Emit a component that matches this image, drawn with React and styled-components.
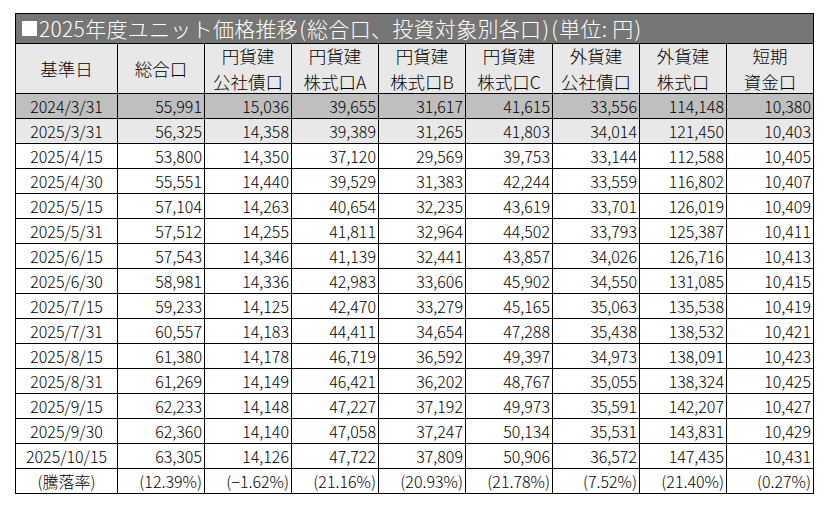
import React from "react";
import styled, { createGlobalStyle } from "styled-components";

const Global = createGlobalStyle`
  html, body { margin: 0; padding: 0; background: #ffffff; }
  body { font-family: "Noto Sans CJK JP", "Noto Sans", sans-serif; }
`;

const Page = styled.div`
  padding: 13px 15px;
`;

const Table = styled.div`
  display: grid;
  grid-template-columns: 102px repeat(8, 87px);
  width: 799px;
  border-left: 1px solid #000;
  border-top: 1px solid #000;
  box-sizing: border-box;
  color: #000;
  font-weight: 300;
`;

const Title = styled.div`
  grid-column: 1 / -1;
  height: 30px;
  box-sizing: border-box;
  background: #767676;
  color: #ffffff;
  border-right: 1px solid #000;
  border-bottom: 1px solid #000;
  display: flex;
  align-items: center;
  padding-left: 5px;
  font-size: 21px;
  line-height: 1;
  letter-spacing: 0.3px;
  white-space: nowrap;
`;

const Square = styled.span`
  display: inline-block;
  width: 15px;
  height: 15px;
  background: #ffffff;
  margin: 0 2px 0 1px;
`;

const Paren = styled.span`
  margin: 0 1px;
`;

const Head = styled.div`
  height: 50px;
  box-sizing: border-box;
  background: #e8e8e8;
  border-right: 1px solid #000;
  border-bottom: 1px solid #000;
  display: flex;
  align-items: center;
  justify-content: center;
  text-align: center;
  font-size: 17.5px;
  line-height: 26px;
  white-space: nowrap;
`;

const Cell = styled.div`
  height: 25px;
  box-sizing: border-box;
  background: ${(p) => (p.$tone === "dark" ? "#bfbfbf" : p.$tone === "light" ? "#e8e8e8" : "#ffffff")};
  border-right: 1px solid #000;
  border-bottom: 1px solid #000;
  display: flex;
  align-items: center;
  justify-content: ${(p) => (p.$center ? "center" : "flex-end")};
  padding: 0 2px 0 2px;
  font-size: 16px;
  line-height: 1;
  white-space: nowrap;
`;

const headers = [
  ["基準日"],
  ["総合口"],
  ["円貨建", "公社債口"],
  ["円貨建", "株式口A"],
  ["円貨建", "株式口B"],
  ["円貨建", "株式口C"],
  ["外貨建", "公社債口"],
  ["外貨建", "株式口"],
  ["短期", "資金口"],
];

const rows = [
  ["2024/3/31", "55,991", "15,036", "39,655", "31,617", "41,615", "33,556", "114,148", "10,380"],
  ["2025/3/31", "56,325", "14,358", "39,389", "31,265", "41,803", "34,014", "121,450", "10,403"],
  ["2025/4/15", "53,800", "14,350", "37,120", "29,569", "39,753", "33,144", "112,588", "10,405"],
  ["2025/4/30", "55,551", "14,440", "39,529", "31,383", "42,244", "33,559", "116,802", "10,407"],
  ["2025/5/15", "57,104", "14,263", "40,654", "32,235", "43,619", "33,701", "126,019", "10,409"],
  ["2025/5/31", "57,512", "14,255", "41,811", "32,964", "44,502", "33,793", "125,387", "10,411"],
  ["2025/6/15", "57,543", "14,346", "41,139", "32,441", "43,857", "34,026", "126,716", "10,413"],
  ["2025/6/30", "58,981", "14,336", "42,983", "33,606", "45,902", "34,550", "131,085", "10,415"],
  ["2025/7/15", "59,233", "14,125", "42,470", "33,279", "45,165", "35,063", "135,538", "10,419"],
  ["2025/7/31", "60,557", "14,183", "44,411", "34,654", "47,288", "35,438", "138,532", "10,421"],
  ["2025/8/15", "61,380", "14,178", "46,719", "36,592", "49,397", "34,973", "138,091", "10,423"],
  ["2025/8/31", "61,269", "14,149", "46,421", "36,202", "48,767", "35,055", "138,324", "10,425"],
  ["2025/9/15", "62,233", "14,148", "47,227", "37,192", "49,973", "35,591", "142,207", "10,427"],
  ["2025/9/30", "62,360", "14,140", "47,058", "37,247", "50,134", "35,531", "143,831", "10,429"],
  ["2025/10/15", "63,305", "14,126", "47,722", "37,809", "50,906", "36,572", "147,435", "10,431"],
  ["(騰落率)", "(12.39%)", "(−1.62%)", "(21.16%)", "(20.93%)", "(21.78%)", "(7.52%)", "(21.40%)", "(0.27%)"],
];

export default function App() {
  return (
    <Page>
      <Global />
      <Table>
        <Title>
          <Square />
          2025年度ユニット価格推移<Paren>(</Paren>総合口、投資対象別各口<Paren>)</Paren>
          <Paren>(</Paren>単位: 円<Paren>)</Paren>
        </Title>
        {headers.map((h, i) => (
          <Head key={i}>
            <div>
              {h.map((l, j) => (
                <div key={j}>{l}</div>
              ))}
            </div>
          </Head>
        ))}
        {rows.map((r, ri) =>
          r.map((v, ci) => (
            <Cell
              key={ri + "-" + ci}
              $tone={ri === 0 ? "dark" : ri === 1 ? "light" : "white"}
              $center={ci === 0}
            >
              {v}
            </Cell>
          ))
        )}
      </Table>
    </Page>
  );
}
